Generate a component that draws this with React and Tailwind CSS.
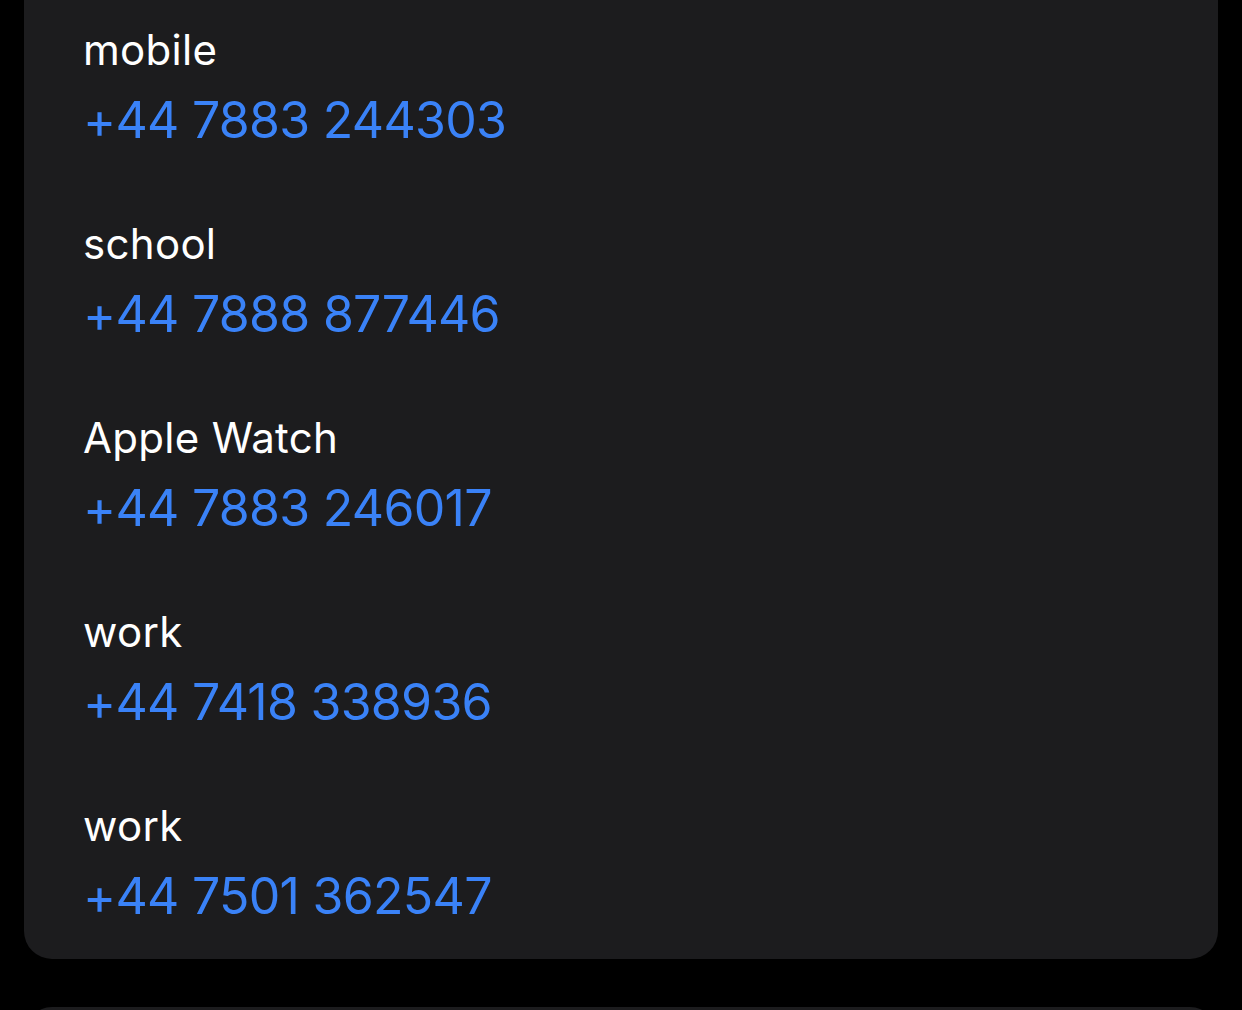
import React from "react";

const phones = [
  { label: "mobile", number: "+44 7883 244303" },
  { label: "school", number: "+44 7888 877446" },
  { label: "Apple Watch", number: "+44 7883 246017" },
  { label: "work", number: "+44 7418 338936" },
  { label: "work", number: "+44 7501 362547" },
];

const App = () => {
  return (
    <div
      className="min-h-screen bg-black px-[24px] overflow-hidden"
      style={{ fontFamily: "Inter, 'Noto Sans', sans-serif" }}
    >
      {/* Phone numbers card */}
      <div className="bg-[#1c1c1e] rounded-b-[28px] pl-[59px] pt-[25px] pb-[33px] flex flex-col gap-[69px]">
        {phones.map((p, i) => (
          <div key={i} className="flex flex-col">
            <div className="text-white text-[42px] leading-[50px] tracking-[0.3px]">{p.label}</div>
            <div className="mt-[15px] text-[#3a82f7] text-[50px] leading-[60px] tracking-[-0.7px]">
              {p.number}
            </div>
          </div>
        ))}
      </div>

      {/* Next card */}
      <div className="mt-[48px] bg-[#1c1c1e] rounded-t-[28px] h-[120px]" />
    </div>
  );
};

export default App;
